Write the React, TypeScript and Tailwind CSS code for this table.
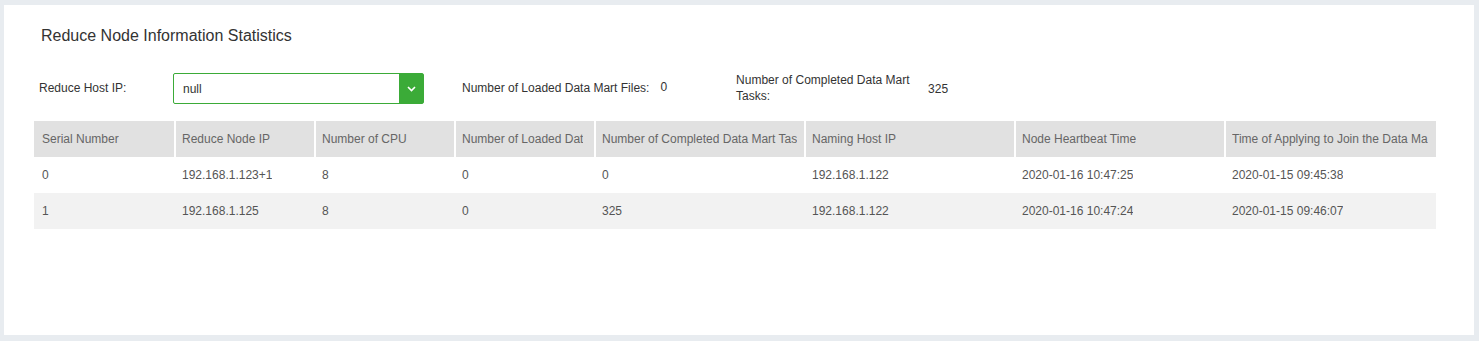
import { useState } from 'react';

type NodeRow = {
  serial: string;
  nodeIp: string;
  cpu: string;
  loaded: string;
  completed: string;
  namingIp: string;
  heartbeat: string;
  joinTime: string;
};

// widths include the 2px white separator on the left of every column but the first.
// long headers show only what fits in the column, as the original table does
const columns: { key: keyof NodeRow; title: string; full: string; width: string; first?: boolean }[] = [
  { key: 'serial', title: 'Serial Number', full: 'Serial Number', width: 'w-[140px]', first: true },
  { key: 'nodeIp', title: 'Reduce Node IP', full: 'Reduce Node IP', width: 'w-[140px]' },
  { key: 'cpu', title: 'Number of CPU', full: 'Number of CPU', width: 'w-[140px]' },
  { key: 'loaded', title: 'Number of Loaded Dat', full: 'Number of Loaded Data Mart Files', width: 'w-[140px]' },
  {
    key: 'completed',
    title: 'Number of Completed Data Mart Tas',
    full: 'Number of Completed Data Mart Tasks',
    width: 'w-[210px]',
  },
  { key: 'namingIp', title: 'Naming Host IP', full: 'Naming Host IP', width: 'w-[210px]' },
  { key: 'heartbeat', title: 'Node Heartbeat Time', full: 'Node Heartbeat Time', width: 'w-[210px]' },
  {
    key: 'joinTime',
    title: 'Time of Applying to Join the Data Ma',
    full: 'Time of Applying to Join the Data Mart',
    width: 'w-[212px]',
  },
];

const rows: NodeRow[] = [
  {
    serial: '0',
    nodeIp: '192.168.1.123+1',
    cpu: '8',
    loaded: '0',
    completed: '0',
    namingIp: '192.168.1.122',
    heartbeat: '2020-01-16 10:47:25',
    joinTime: '2020-01-15 09:45:38',
  },
  {
    serial: '1',
    nodeIp: '192.168.1.125',
    cpu: '8',
    loaded: '0',
    completed: '325',
    namingIp: '192.168.1.122',
    heartbeat: '2020-01-16 10:47:24',
    joinTime: '2020-01-15 09:46:07',
  },
];

function HostSelect({ value }: { value: string }) {
  return (
    <div className="flex h-[31px] w-[251px] items-stretch rounded-[2px] border border-[#3bab38] bg-white">
      <div className="flex flex-1 items-center pl-[9px] text-[12px] text-[#333]">{value}</div>
      <div className="flex w-[24px] items-center justify-center bg-[#3bab38]">
        <svg width="9" height="6" viewBox="0 0 9 6" fill="none">
          <polyline points="1,1 4.5,4.5 8,1" stroke="white" strokeWidth="1.6" />
        </svg>
      </div>
    </div>
  );
}

export default function App() {
  const [host] = useState('null');

  return (
    <div className="h-[341px] w-full bg-[#e8ecf0] pt-[5px] pr-[5px] pb-[6px] pl-[4px] font-['Liberation_Sans',Arial,sans-serif]">
      <div className="h-full bg-white pt-[20px] pl-[30px]">
        {/* Title */}
        <h2 className="ml-[7px] text-[16px] leading-[22px] text-[#333]">Reduce Node Information Statistics</h2>

        {/* Filters */}
        <div className="mt-[26px] flex h-[31px] items-center text-[12px] text-[#333]">
          <span className="ml-[5px] w-[134px] pb-[2px]">Reduce Host IP:</span>
          <HostSelect value={host} />
          <span className="ml-[38px] pb-[2px]">Number of Loaded Data Mart Files:</span>
          <span className="ml-[11px] pb-[3px]">0</span>
          <span className="ml-[69px] w-[180px] pb-[1px] leading-[16px]">Number of Completed Data Mart Tasks:</span>
          <span className="ml-[12px]">325</span>
        </div>

        {/* Table */}
        <div className="mt-[17px] w-[1402px] text-[12px]">
          <div className="flex h-[36px] bg-[#e1e1e1] text-[#666]">
            {columns.map((c) => (
              <div
                key={c.key}
                title={c.full}
                className={`${c.width} flex shrink-0 items-center pr-[4px] ${c.first ? 'pl-[8px]' : 'border-l-2 border-white pl-[6px]'}`}
              >
                <div className="min-w-0 overflow-hidden whitespace-nowrap">{c.title}</div>
              </div>
            ))}
          </div>
          {rows.map((r, i) => (
            <div key={r.serial} className={`flex h-[36px] text-[#555] ${i % 2 === 1 ? 'bg-[#f2f2f2]' : 'bg-white'}`}>
              {columns.map((c) => (
                <div key={c.key} className={`${c.width} flex shrink-0 items-center pl-[8px]`}>
                  <div className="min-w-0 overflow-hidden whitespace-nowrap">{r[c.key]}</div>
                </div>
              ))}
            </div>
          ))}
        </div>
      </div>
    </div>
  );
}
